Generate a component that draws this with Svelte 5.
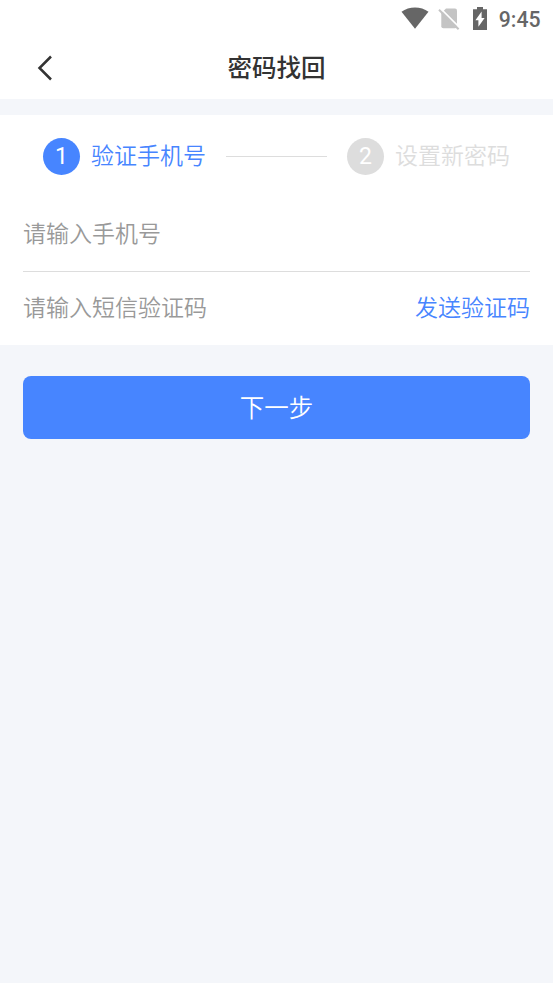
<script>
  let phone = "";
  let code = "";

  const steps = [
    { id: 1, label: "验证手机号" },
    { id: 2, label: "设置新密码" },
  ];
  let current = 1;

  function handleSubmit(event) {
    event.preventDefault();
  }
</script>

<div class="page">
  <header>
    <div class="status-bar">
      <svg class="wifi" width="28" height="22" viewBox="0 0 28 22" aria-hidden="true">
        <path d="M0.5 4.8C8 -1.1 20 -1.1 27.5 4.8L14 21.8z" fill="#666" />
      </svg>
      <svg class="sim" width="22" height="22" viewBox="0 0 22 22" aria-hidden="true">
        <path d="M8 0.5h9q2 0 2 2v15.8q0 2-2 2H5.3q-2 0-2-2V5.2z" fill="#c4c4c4" />
        <path d="M2.2 0.2L21.8 19.8" stroke="#fff" stroke-width="1.8" />
        <path d="M1 1.7L20.6 21.3" stroke="#c4c4c4" stroke-width="2" />
      </svg>
      <svg class="battery" width="14" height="23" viewBox="0 0 14 23" aria-hidden="true">
        <path d="M4 0h6v2.2h4V23H0V2.2h4z" fill="#666" />
        <path d="M8.6 4.4v6.6h3L5.4 19.7v-6.5H2.4z" fill="#fff" />
      </svg>
      <span class="time">9:45</span>
    </div>
    <div class="nav-bar">
      <button type="button" class="back" aria-label="返回">
        <svg width="16" height="26" viewBox="0 0 16 26">
          <path d="M14 1.5L2.5 13L14 24.5" fill="none" stroke="#333" stroke-width="2.5" />
        </svg>
      </button>
      <h1>密码找回</h1>
    </div>
  </header>

  <form on:submit={handleSubmit}>
    <div class="card">
      <div class="steps">
        {#each steps as step, i}
          {#if i > 0}
            <div class="step-line"></div>
          {/if}
          <div class="step" class:active={step.id === current}>
            <span class="step-num">{step.id}</span>
            <span class="step-label">{step.label}</span>
          </div>
        {/each}
      </div>

      <div class="field phone">
        <input type="tel" bind:value={phone} placeholder="请输入手机号" />
      </div>
      <div class="field code">
        <input type="text" bind:value={code} placeholder="请输入短信验证码" />
        <button type="button" class="send">发送验证码</button>
      </div>
    </div>

    <button type="submit" class="next">下一步</button>
  </form>
</div>

<style>
  :global(body) {
    margin: 0;
    background: #f4f6fa;
  }

  .page {
    min-height: 100vh;
    background: #f4f6fa;
    color: #333;
    font-family: Roboto, "Noto Sans CJK SC", sans-serif;
    font-size: 23px;
    font-weight: 350;
  }

  header {
    height: 99px;
    background: #fff;
  }

  button {
    padding: 0;
    border: none;
    background: none;
    font-family: inherit;
    font-weight: inherit;
    cursor: pointer;
  }

  .status-bar {
    display: flex;
    align-items: center;
    justify-content: flex-end;
    height: 37px;
    padding-right: 12.5px;
  }

  .wifi {
    margin-right: 9px;
    margin-bottom: 1px;
  }

  .sim {
    margin-right: 13px;
  }

  .battery {
    margin-right: 11.5px;
  }

  .time {
    padding-top: 2px;
    color: #666;
    font-size: 21.2px;
    font-weight: 500;
    line-height: 37px;
  }

  .nav-bar {
    display: grid;
    grid-template-columns: 53px 1fr 53px;
    align-items: center;
    height: 61px;
  }

  .back {
    display: flex;
    justify-content: flex-end;
  }

  h1 {
    margin: 0;
    padding-top: 2px;
    font-size: 24.5px;
    font-weight: 500;
    line-height: 36px;
    text-align: center;
  }

  .card {
    height: 230px;
    margin-top: 16px;
    padding: 0 23px;
    background: #fff;
    box-sizing: border-box;
  }

  .steps {
    display: flex;
    align-items: center;
    justify-content: space-between;
    height: 82px;
    padding: 0 20px;
  }

  .step {
    display: flex;
    align-items: center;
    gap: 11px;
    color: #ddd;
  }

  .step-num {
    width: 37px;
    height: 37px;
    border-radius: 50%;
    background: #ddd;
    color: #fff;
    font-weight: 400;
    line-height: 37px;
    text-align: center;
  }

  .step-label {
    padding-top: 1px;
    line-height: 34px;
  }

  .step.active {
    color: #4785ff;
  }

  .step.active .step-num {
    background: #4785ff;
  }

  .step-line {
    width: 101px;
    height: 1px;
    background: #ddd;
  }

  .field {
    display: flex;
    align-items: center;
    box-sizing: border-box;
  }

  .phone {
    height: 75px;
    border-bottom: 1px solid #ddd;
  }

  .code {
    height: 73px;
  }

  input {
    flex: 1;
    min-width: 0;
    height: 36px;
    padding: 0;
    border: none;
    outline: none;
    background: transparent;
    color: #333;
    font-family: inherit;
    font-size: 23px;
    font-weight: inherit;
  }

  input::placeholder {
    color: #999;
    opacity: 1;
  }

  .send {
    padding-top: 1px;
    color: #4785ff;
    font-size: 23px;
    line-height: 34px;
  }

  .next {
    display: block;
    width: calc(100% - 46px);
    height: 63px;
    margin: 31px 23px 0;
    padding-bottom: 3px;
    border-radius: 8px;
    background: #4785ff;
    color: #fff;
    font-size: 24.5px;
  }
</style>
